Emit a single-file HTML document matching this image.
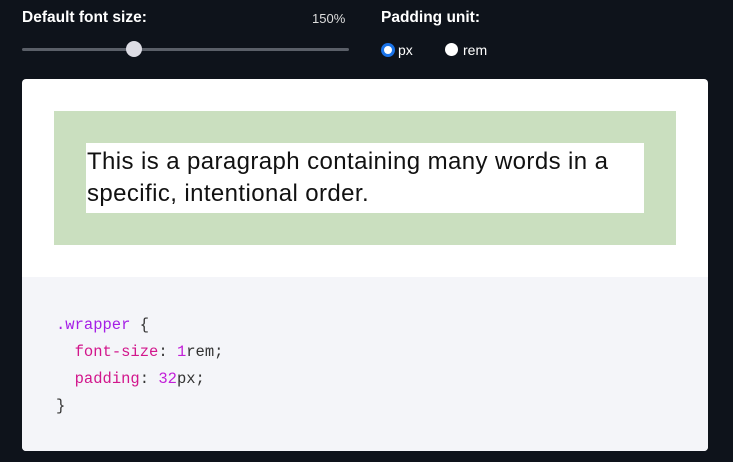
<!DOCTYPE html><html><head><style>
body{margin:0;width:733px;height:462px;background:#0e131b;font-family:"Liberation Sans",sans-serif;position:relative;overflow:hidden}
.l{position:absolute;color:#fff;font-weight:bold;font-size:15.5px}
.card{position:absolute;left:22px;top:79px;width:686px;height:372px;background:#fff;border-radius:4px;overflow:hidden}
.green{position:absolute;left:32px;top:32px;width:622px;height:134px;background:#cadfbf}
.inner{position:absolute;left:32px;top:32px;width:558px;height:70px;background:#fff;font-size:24px;letter-spacing:0.4px;line-height:32px;color:#111;padding-left:1px;padding-top:3px;box-sizing:border-box}
.code{position:absolute;left:0;top:198px;width:686px;height:174px;background:#f4f5f9;font-family:"Liberation Mono",monospace;font-size:15.5px;line-height:27px;color:#333;padding:35px 0 0 34px;box-sizing:border-box}
.s{color:#a51ee6}.p{color:#d2168c}.n{color:#c21fd8}
</style></head><body>
<div class="l" style="left:22px;top:9px">Default font size:</div>
<div style="position:absolute;left:312px;top:11px;color:#ddd;font-size:13px">150%</div>
<div style="position:absolute;left:22px;top:48px;width:327px;height:3px;background:#5a5f68;border-radius:2px"></div>
<div style="position:absolute;left:126px;top:41px;width:16px;height:16px;background:#dcdce4;border-radius:50%"></div>
<div class="l" style="left:381px;top:9px">Padding unit:</div>
<div style="position:absolute;left:381px;top:43px;width:8px;height:8px;border:3px solid #1a73e8;background:#fff;border-radius:50%"></div>
<div style="position:absolute;left:398px;top:42px;color:#fff;font-size:14px">px</div>
<div style="position:absolute;left:445px;top:43px;width:13px;height:13px;background:#fff;border-radius:50%"></div>
<div style="position:absolute;left:463px;top:42px;color:#fff;font-size:14px">rem</div>
<div class="card">
<div class="green"><div class="inner">This is a paragraph containing many words in a specific, intentional order.</div></div>
<div class="code"><span class="s">.wrapper</span> {<br>&nbsp;&nbsp;<span class="p">font-size</span>: <span class="n">1</span>rem;<br>&nbsp;&nbsp;<span class="p">padding</span>: <span class="n">32</span>px;<br>}</div>
</div>
</body></html>
